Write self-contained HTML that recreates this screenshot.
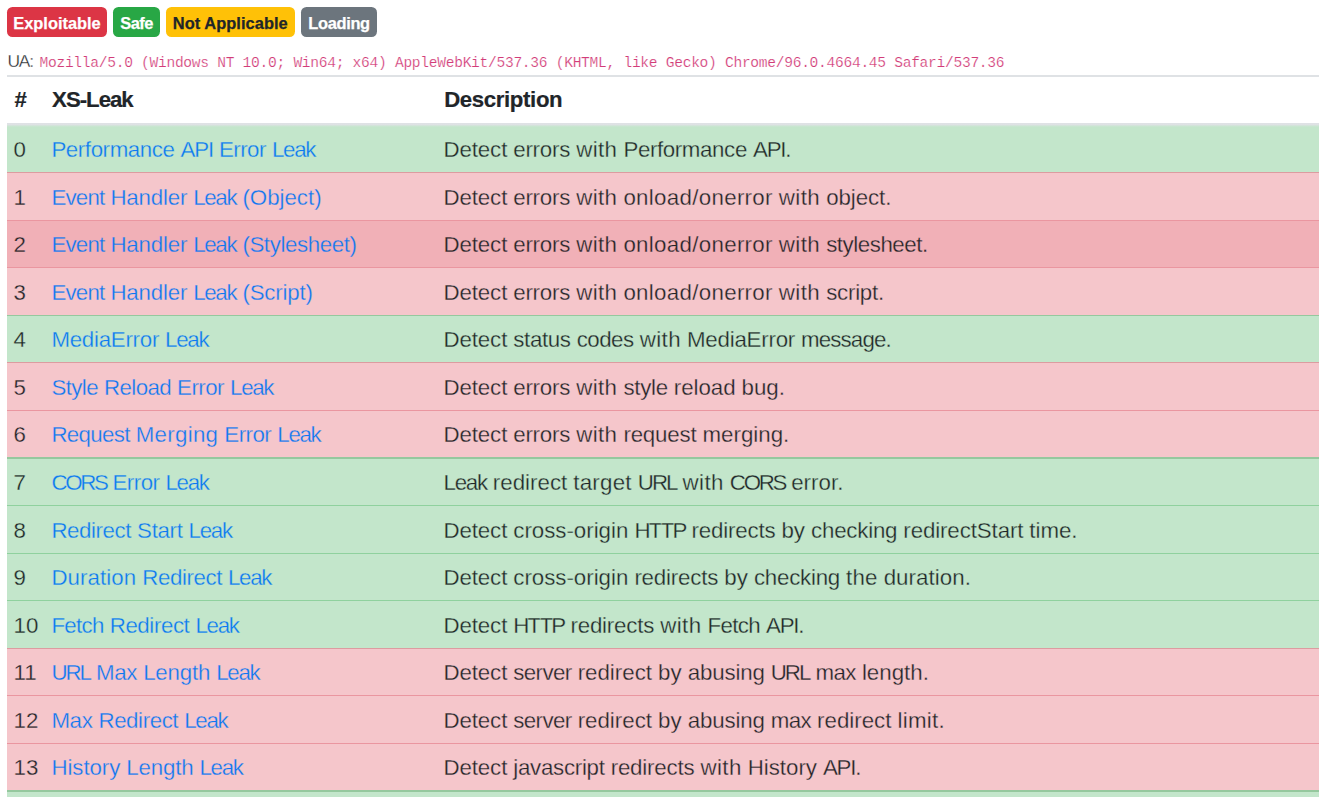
<!DOCTYPE html>
<html><head><meta charset="utf-8"><title>XS-Leaks</title>
<style>
html,body{margin:0;padding:0;background:#fff;}
body{width:1325px;height:797px;overflow:hidden;position:relative;font-family:"Liberation Sans",sans-serif;color:#212529;font-size:22.3px;line-height:33px;}
.b{position:absolute;top:7px;height:30px;border-radius:5.5px;box-sizing:border-box;font-weight:700;font-size:16.4px;line-height:32px;text-align:center;white-space:nowrap;color:#fff;-webkit-text-stroke:0.25px currentColor;}
.b span{display:inline-block;}
.ua{-webkit-text-stroke:0.3px #fff;position:absolute;left:7.6px;top:47.5px;font-size:17.4px;line-height:26px;white-space:nowrap;}
.code{-webkit-text-stroke:0.2px #fff;position:absolute;left:39.5px;top:49.5px;font-family:"Liberation Mono",monospace;font-size:14.6px;line-height:26px;color:#d23c78;white-space:nowrap;}
.tb{position:absolute;left:7px;width:1312px;background:#dfe2e5;z-index:2;}
.th{-webkit-text-stroke:0.2px currentColor;position:absolute;top:83.0px;font-weight:700;white-space:nowrap;font-size:22.2px;}
.r{position:absolute;left:7px;width:1312px;height:47.575px;box-sizing:border-box;}
.r i{position:absolute;left:0;top:0;width:100%;height:1.1px;display:block;}
.s{background:#c3e6cb;-webkit-text-stroke:0.3px #c3e6cb;} .s i{background:#8fd19e;}
.d{background:#f5c6cb;-webkit-text-stroke:0.3px #f5c6cb;} .d i{background:#ed969e;}
.h{background:#f1b0b7;-webkit-text-stroke:0.3px #f1b0b7;} .h i{background:#ed969e;}
.r span,.r a{position:absolute;top:8.5px;white-space:nowrap;}
.n{left:6.6px;}
.r a{left:44.4px;color:#0d78f2;text-decoration:none;}
.r .t{left:436.5px;}
.r b{position:absolute;top:0;font-weight:400;white-space:nowrap;}
</style></head><body>

<div class="b" id="b0" style="left:7px;width:100px;background:#dc3545;color:#fff"><span style="letter-spacing:0.0px">Exploitable</span></div>
<div class="b" id="b1" style="left:113px;width:47px;background:#28a745;color:#fff"><span style="letter-spacing:-0.534px">Safe</span></div>
<div class="b" id="b2" style="left:166px;width:128.6px;background:#ffc107;color:#212529"><span style="letter-spacing:0.058px">Not Applicable</span></div>
<div class="b" id="b3" style="left:301.3px;width:75.5px;background:#6c757d;color:#fff"><span style="letter-spacing:-0.333px">Loading</span></div>
<div class="ua" id="ua" style="letter-spacing:-1.3px">UA:</div>
<div class="code" id="code" style="letter-spacing:-0.295px">Mozilla/5.0 (Windows NT 10.0; Win64; x64) AppleWebKit/537.36 (KHTML, like Gecko) Chrome/96.0.4664.45 Safari/537.36</div>
<div class="tb" style="top:75.3px;height:1.4px"></div>
<div class="tb" style="top:122.9px;height:4.3px;background:linear-gradient(to bottom,#dfe2e5 0,#dfe2e5 36%,rgba(223,226,229,0) 100%)"></div>
<div class="th" id="h0" style="left:14.4px;letter-spacing:0px">#</div>
<div class="th" id="h1" style="left:52.1px;letter-spacing:-1.001px">XS-Leak</div>
<div class="th" id="h2" style="left:444.2px;letter-spacing:-0.36px">Description</div>
<div class="r s" style="top:124.430px;height:47.575px">
<span class="n" id="n0">0</span><a id="a0"><b style="left:0.00px;letter-spacing:-0.412px">Performance</b><b style="left:129.15px;letter-spacing:-1.196px">API</b><b style="left:167.55px;letter-spacing:-0.520px">Error</b><b style="left:220.54px;letter-spacing:-1.293px">Leak</b></a><span class="t" id="t0"><b style="left:0.00px;letter-spacing:-0.124px">Detect</b><b style="left:69.76px;letter-spacing:-0.232px">errors</b><b style="left:132.65px;letter-spacing:0.394px">with</b><b style="left:179.92px;letter-spacing:-0.376px">Performance</b><b style="left:309.49px;letter-spacing:-1.222px">API.</b></span>
</div>
<div class="r d" style="top:172.005px;height:47.575px"><i style="background:#dc9ca0"></i>
<span class="n" id="n1">1</span><a id="a1"><b style="left:0.00px;letter-spacing:-0.795px">Event</b><b style="left:59.08px;letter-spacing:-0.204px">Handler</b><b style="left:141.78px;letter-spacing:-1.293px">Leak</b><b style="left:190.99px;letter-spacing:-0.009px">(Object)</b></a><span class="t" id="t1"><b style="left:0.00px;letter-spacing:-0.124px">Detect</b><b style="left:69.76px;letter-spacing:-0.232px">errors</b><b style="left:132.65px;letter-spacing:0.394px">with</b><b style="left:179.92px;letter-spacing:0.312px">onload/onerror</b><b style="left:335.37px;letter-spacing:0.394px">with</b><b style="left:382.65px;letter-spacing:-0.065px">object.</b></span>
</div>
<div class="r h" style="top:219.580px;height:47.575px"><i style="background:#ea96a0"></i>
<span class="n" id="n2">2</span><a id="a2"><b style="left:0.00px;letter-spacing:-0.795px">Event</b><b style="left:59.08px;letter-spacing:-0.204px">Handler</b><b style="left:141.78px;letter-spacing:-1.293px">Leak</b><b style="left:190.99px;letter-spacing:-0.406px">(Stylesheet)</b></a><span class="t" id="t2"><b style="left:0.00px;letter-spacing:-0.124px">Detect</b><b style="left:69.76px;letter-spacing:-0.232px">errors</b><b style="left:132.65px;letter-spacing:0.394px">with</b><b style="left:179.92px;letter-spacing:0.312px">onload/onerror</b><b style="left:335.37px;letter-spacing:0.394px">with</b><b style="left:382.65px;letter-spacing:-0.457px">stylesheet.</b></span>
</div>
<div class="r d" style="top:267.155px;height:47.575px"><i style="background:#ea96a0"></i>
<span class="n" id="n3">3</span><a id="a3"><b style="left:0.00px;letter-spacing:-0.795px">Event</b><b style="left:59.08px;letter-spacing:-0.204px">Handler</b><b style="left:141.78px;letter-spacing:-1.293px">Leak</b><b style="left:190.99px;letter-spacing:-0.174px">(Script)</b></a><span class="t" id="t3"><b style="left:0.00px;letter-spacing:-0.124px">Detect</b><b style="left:69.76px;letter-spacing:-0.232px">errors</b><b style="left:132.65px;letter-spacing:0.394px">with</b><b style="left:179.92px;letter-spacing:0.312px">onload/onerror</b><b style="left:335.37px;letter-spacing:0.394px">with</b><b style="left:382.65px;letter-spacing:-0.238px">script.</b></span>
</div>
<div class="r s" style="top:314.730px;height:47.575px"><i style="background:#95c89e"></i>
<span class="n" id="n4">4</span><a id="a4"><b style="left:0.00px;letter-spacing:-0.260px">MediaError</b><b style="left:113.71px;letter-spacing:-1.293px">Leak</b></a><span class="t" id="t4"><b style="left:0.00px;letter-spacing:-0.124px">Detect</b><b style="left:69.76px;letter-spacing:-0.354px">status</b><b style="left:133.17px;letter-spacing:-0.501px">codes</b><b style="left:196.22px;letter-spacing:0.394px">with</b><b style="left:243.49px;letter-spacing:-0.226px">MediaError</b><b style="left:357.56px;letter-spacing:-0.863px">message.</b></span>
</div>
<div class="r d" style="top:362.305px;height:47.575px"><i style="background:#dc9ca0"></i>
<span class="n" id="n5">5</span><a id="a5"><b style="left:0.00px;letter-spacing:-0.594px">Style</b><b style="left:52.64px;letter-spacing:-0.609px">Reload</b><b style="left:125.68px;letter-spacing:-0.520px">Error</b><b style="left:178.67px;letter-spacing:-1.293px">Leak</b></a><span class="t" id="t5"><b style="left:0.00px;letter-spacing:-0.124px">Detect</b><b style="left:69.76px;letter-spacing:-0.232px">errors</b><b style="left:132.65px;letter-spacing:0.394px">with</b><b style="left:179.92px;letter-spacing:-0.294px">style</b><b style="left:230.36px;letter-spacing:-0.048px">reload</b><b style="left:298.10px;letter-spacing:-0.048px">bug.</b></span>
</div>
<div class="r d" style="top:409.880px;height:47.575px"><i style="background:#ea96a0"></i>
<span class="n" id="n6">6</span><a id="a6"><b style="left:0.00px;letter-spacing:-0.676px">Request</b><b style="left:84.36px;letter-spacing:0.283px">Merging</b><b style="left:172.93px;letter-spacing:-0.520px">Error</b><b style="left:225.92px;letter-spacing:-1.293px">Leak</b></a><span class="t" id="t6"><b style="left:0.00px;letter-spacing:-0.124px">Detect</b><b style="left:69.76px;letter-spacing:-0.232px">errors</b><b style="left:132.65px;letter-spacing:0.394px">with</b><b style="left:179.92px;letter-spacing:-0.190px">request</b><b style="left:259.01px;letter-spacing:0.001px">merging.</b></span>
</div>
<div class="r s" style="top:457.455px;height:47.575px"><i style="background:#95c89e"></i>
<span class="n" id="n7">7</span><a id="a7"><b style="left:0.00px;letter-spacing:-2.339px">CORS</b><b style="left:61.09px;letter-spacing:-0.520px">Error</b><b style="left:114.08px;letter-spacing:-1.293px">Leak</b></a><span class="t" id="t7"><b style="left:0.00px;letter-spacing:-1.258px">Leak</b><b style="left:49.37px;letter-spacing:0.008px">redirect</b><b style="left:129.84px;letter-spacing:0.224px">target</b><b style="left:194.26px;letter-spacing:-1.949px">URL</b><b style="left:239.07px;letter-spacing:0.394px">with</b><b style="left:286.35px;letter-spacing:-2.296px">CORS</b><b style="left:347.63px;letter-spacing:0.038px">error.</b></span>
</div>
<div class="r s" style="top:505.030px;height:47.575px"><i style="background:#8fd19e"></i>
<span class="n" id="n8">8</span><a id="a8"><b style="left:0.00px;letter-spacing:-0.416px">Redirect</b><b style="left:85.73px;letter-spacing:-0.331px">Start</b><b style="left:137.20px;letter-spacing:-1.293px">Leak</b></a><span class="t" id="t8"><b style="left:0.00px;letter-spacing:-0.124px">Detect</b><b style="left:69.76px;letter-spacing:-0.013px">cross-origin</b><b style="left:190.88px;letter-spacing:-1.766px">HTTP</b><b style="left:248.08px;letter-spacing:-0.192px">redirects</b><b style="left:337.90px;letter-spacing:0.040px">by</b><b style="left:367.59px;letter-spacing:-0.230px">checking</b><b style="left:459.82px;letter-spacing:-0.110px">redirectStart</b><b style="left:585.87px;letter-spacing:-0.038px">time.</b></span>
</div>
<div class="r s" style="top:552.605px;height:47.575px"><i style="background:#8fd19e"></i>
<span class="n" id="n9">9</span><a id="a9"><b style="left:0.00px;letter-spacing:0.067px">Duration</b><b style="left:90.85px;letter-spacing:-0.416px">Redirect</b><b style="left:176.58px;letter-spacing:-1.293px">Leak</b></a><span class="t" id="t9"><b style="left:0.00px;letter-spacing:-0.124px">Detect</b><b style="left:69.76px;letter-spacing:-0.013px">cross-origin</b><b style="left:190.88px;letter-spacing:-0.192px">redirects</b><b style="left:280.70px;letter-spacing:0.040px">by</b><b style="left:310.39px;letter-spacing:-0.230px">checking</b><b style="left:402.62px;letter-spacing:0.166px">the</b><b style="left:440.16px;letter-spacing:0.066px">duration.</b></span>
</div>
<div class="r s" style="top:600.180px;height:47.575px"><i style="background:#8fd19e"></i>
<span class="n" id="n10">10</span><a id="a10"><b style="left:0.00px;letter-spacing:-0.695px">Fetch</b><b style="left:58.32px;letter-spacing:-0.416px">Redirect</b><b style="left:144.05px;letter-spacing:-1.293px">Leak</b></a><span class="t" id="t10"><b style="left:0.00px;letter-spacing:-0.124px">Detect</b><b style="left:69.76px;letter-spacing:-1.766px">HTTP</b><b style="left:126.96px;letter-spacing:-0.192px">redirects</b><b style="left:216.78px;letter-spacing:0.394px">with</b><b style="left:264.05px;letter-spacing:-0.661px">Fetch</b><b style="left:322.56px;letter-spacing:-1.222px">API.</b></span>
</div>
<div class="r d" style="top:647.755px;height:47.575px"><i style="background:#dc9ca0"></i>
<span class="n" id="n11">11</span><a id="a11"><b style="left:0.00px;letter-spacing:-1.990px">URL</b><b style="left:44.67px;letter-spacing:-0.360px">Max</b><b style="left:91.74px;letter-spacing:-0.179px">Length</b><b style="left:164.89px;letter-spacing:-1.293px">Leak</b></a><span class="t" id="t11"><b style="left:0.00px;letter-spacing:-0.124px">Detect</b><b style="left:69.76px;letter-spacing:-0.602px">server</b><b style="left:134.14px;letter-spacing:0.008px">redirect</b><b style="left:214.61px;letter-spacing:0.040px">by</b><b style="left:244.30px;letter-spacing:-0.182px">abusing</b><b style="left:327.18px;letter-spacing:-1.949px">URL</b><b style="left:371.99px;letter-spacing:-0.593px">max</b><b style="left:418.38px;letter-spacing:0.019px">length.</b></span>
</div>
<div class="r d" style="top:695.330px;height:47.575px"><i style="background:#ea96a0"></i>
<span class="n" id="n12">12</span><a id="a12"><b style="left:0.00px;letter-spacing:-0.360px">Max</b><b style="left:47.07px;letter-spacing:-0.416px">Redirect</b><b style="left:132.81px;letter-spacing:-1.293px">Leak</b></a><span class="t" id="t12"><b style="left:0.00px;letter-spacing:-0.124px">Detect</b><b style="left:69.76px;letter-spacing:-0.602px">server</b><b style="left:134.14px;letter-spacing:0.008px">redirect</b><b style="left:214.61px;letter-spacing:0.040px">by</b><b style="left:244.30px;letter-spacing:-0.182px">abusing</b><b style="left:327.18px;letter-spacing:-0.593px">max</b><b style="left:373.57px;letter-spacing:0.008px">redirect</b><b style="left:454.04px;letter-spacing:0.243px">limit.</b></span>
</div>
<div class="r d" style="top:742.905px;height:47.575px"><i style="background:#ea96a0"></i>
<span class="n" id="n13">13</span><a id="a13"><b style="left:0.00px;letter-spacing:-0.068px">History</b><b style="left:74.93px;letter-spacing:-0.179px">Length</b><b style="left:148.08px;letter-spacing:-1.293px">Leak</b></a><span class="t" id="t13"><b style="left:0.00px;letter-spacing:-0.124px">Detect</b><b style="left:69.76px;letter-spacing:-0.280px">javascript</b><b style="left:167.18px;letter-spacing:-0.192px">redirects</b><b style="left:257.01px;letter-spacing:0.394px">with</b><b style="left:304.28px;letter-spacing:-0.036px">History</b><b style="left:379.45px;letter-spacing:-1.222px">API.</b></span>
</div>
<div class="r s" style="top:790.480px;height:47.575px"><i style="background:#95c89e"></i>
</div>
</body></html>
